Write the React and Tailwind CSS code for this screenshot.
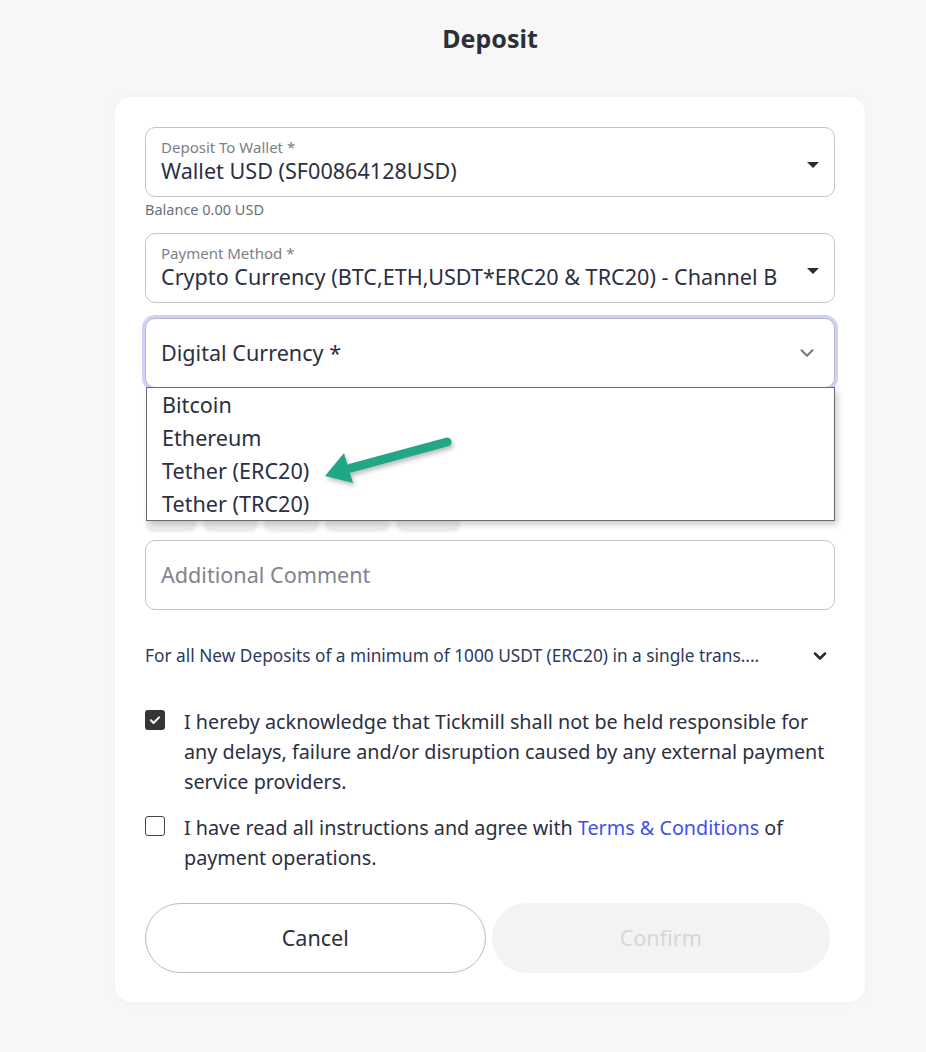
import { ChevronDown } from "lucide-react";

const FONT = { fontFamily: '"Noto Sans", "Open Sans", sans-serif' };

function SelectField({ label, value }) {
  return (
    <div className="relative h-[70px] rounded-[10px] border border-[#c4c4c4] bg-white pl-[15px] pr-[50px] pt-[9px]">
      <div className="text-[15px] leading-[20px] text-[#7b7f88]">{label}</div>
      <div className="truncate text-[21.6px] leading-[28px] text-[#2b3042]">{value}</div>
      {/* caret */}
      <div className="absolute right-[15px] top-[34px] h-0 w-0 border-x-[6px] border-t-[6px] border-x-transparent border-t-[#2b2b2b]" />
    </div>
  );
}

const CHIPS = ["w-[48px]", "w-[51px]", "w-[51px]", "w-[61px]", "w-[61px]"];
const OPTIONS = ["Bitcoin", "Ethereum", "Tether (ERC20)", "Tether (TRC20)"];

export default function App() {
  return (
    <div className="min-h-[1052px] bg-[#f7f7f7] pb-[50px]" style={FONT}>
      <div className="ml-[115px] w-[750px]">
        <h1 className="pt-[20px] text-center text-[25px] font-bold leading-[36px] text-[#2b2f3a]">Deposit</h1>

        <div className="mt-[41px] rounded-[16px] bg-white px-[30px] pb-[29px] pt-[30px] shadow-[0_0_12px_rgba(0,0,0,0.03)]">
          <SelectField label="Deposit To Wallet *" value="Wallet USD (SF00864128USD)" />
          <div className="mt-[3px] text-[14.5px] leading-[18px] text-[#6b6f78]">Balance 0.00 USD</div>

          <div className="mt-[15px]">
            <SelectField
              label="Payment Method *"
              value="Crypto Currency (BTC,ETH,USDT*ERC20 & TRC20) - Channel B"
            />
          </div>

          {/* Digital currency (open) */}
          <div className="relative mt-[15px]">
            <div className="flex h-[70px] items-center justify-between rounded-[10px] border border-[#b9b9c4] bg-white pl-[15px] pr-[16px] shadow-[0_0_0_3px_#cdd2fa,0_4px_6px_rgba(0,0,0,0.06)]">
              <span className="text-[21.6px] text-[#2b3042]">Digital Currency *</span>
              <ChevronDown size={22} strokeWidth={2.2} className="text-[#777]" />
            </div>

            {/* hidden amount row behind the list */}
            <div className="flex h-[152px] items-end gap-[10px] pb-[11px] pl-[2px]">
              {CHIPS.map((w, i) => (
                <div key={i} className={`${w} h-[26px] rounded-[5px] bg-[#efefef] shadow-[0_2px_4px_rgba(0,0,0,0.12)]`} />
              ))}
            </div>

            <div className="absolute left-[1px] right-0 top-[69px] border border-[#6b6b6b] bg-white shadow-[3px_4px_6px_rgba(0,0,0,0.18)]">
              {OPTIONS.map((o) => (
                <div key={o} className="pl-[15px] text-[21.6px] leading-[33px] text-[#2b3042]">{o}</div>
              ))}
            </div>

            {/* annotation arrow */}
            <svg
              className="absolute left-[176px] top-[117px]"
              width="135"
              height="52"
              viewBox="0 0 135 52"
              style={{ filter: "drop-shadow(2px 3px 2px rgba(0,0,0,0.25))" }}
            >
              <line x1="126" y1="7" x2="30" y2="33" stroke="#1fa787" strokeWidth="9" strokeLinecap="round" />
              <polygon points="4,41 23,18 32,48" fill="#1fa787" />
            </svg>
          </div>

          <div className="flex h-[70px] items-center rounded-[10px] border border-[#c4c4c4] bg-white pl-[15px]">
            <span className="text-[21.6px] text-[#80848e]">Additional Comment</span>
          </div>

          <div className="mt-[34px] flex items-center justify-between pr-[5px]">
            <span className="text-[17.3px] leading-[24px] text-[#2e3a5c]">
              For all New Deposits of a minimum of 1000 USDT (ERC20) in a single trans....
            </span>
            <ChevronDown size={20} strokeWidth={3} className="text-[#2b2b2b]" />
          </div>

          <div className="mt-[39px] flex gap-[19px]">
            <div className="mt-[3px] flex h-[20px] w-[20px] shrink-0 items-center justify-center rounded-[3px] bg-[#353535]">
              <svg width="14" height="14" viewBox="0 0 24 24" fill="none" stroke="white" strokeWidth="3.5" strokeLinecap="round" strokeLinejoin="round">
                <path d="M5 12.5l4.5 4.5L19 7.5" />
              </svg>
            </div>
            <p className="text-[19.75px] leading-[30px] text-[#2b3042]">
              I hereby acknowledge that Tickmill shall not be held responsible for any delays, failure and/or
              disruption caused by any external payment service providers.
            </p>
          </div>

          <div className="mt-[16px] flex gap-[19px]">
            <div className="mt-[3px] h-[20px] w-[20px] shrink-0 rounded-[3px] border-[1.5px] border-[#444]" />
            <p className="text-[19.75px] leading-[30px] text-[#2b3042]">
              I have read all instructions and agree with <span className="text-[#3f4ff0]">Terms &amp; Conditions</span> of
              payment operations.
            </p>
          </div>

          <div className="mt-[30px] flex gap-[6px] pr-[5px]">
            <button className="h-[70px] flex-1 rounded-full border border-[#bdbdbd] bg-white text-[21.6px] text-[#2b3042]">
              Cancel
            </button>
            <button className="h-[70px] flex-1 rounded-full bg-[#f3f3f3] text-[21.6px] text-[#d7d7d7]">Confirm</button>
          </div>
        </div>
      </div>
    </div>
  );
}
